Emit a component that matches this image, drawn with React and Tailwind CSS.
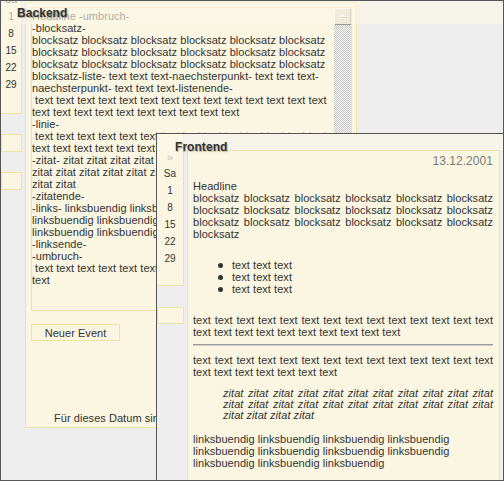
import React from 'react';

const rep = (w, n) => Array(n).fill(w).join(' ');
const T = (n) => rep('text', n);
const B = (n) => rep('blocksatz', n);
const Z = (n) => rep('zitat', n);
const L = (n) => rep('linksbuendig', n);

const backendLines = [
  'Headline -umbruch-',
  '-blocksatz-',
  B(6),
  B(6),
  B(6),
  'blocksatz-liste- text text text-naechsterpunkt- text text text-',
  'naechsterpunkt- text text text-listenende-',
  ' ' + T(14),
  T(10),
  '-linie-',
  ' ' + T(14),
  T(7),
  '-zitat- ' + Z(11),
  Z(13),
  Z(2),
  '-zitatende-',
  '-links- ' + L(4),
  L(4),
  L(3),
  '-linksende-',
  '-umbruch-',
  ' ' + T(14),
  'text',
];

function Calendar({ pbClass }) {
  const rows = ['1', '8', '15', '22', '29'];
  return (
    <div
      className={`flex flex-col border-b border-r border-[#efe1a3] bg-[#faf6e1] pt-[15px] text-center text-[10px] ${pbClass}`}
    >
      <div className="h-[17px] text-[11px] leading-[17px] text-[#c4c4c4]">»</div>
      <div className="h-[16px] leading-[16px]">Sa</div>
      {rows.map((r) => (
        <div key={r} className="h-[17px] leading-[17px]">
          {r}
        </div>
      ))}
    </div>
  );
}

function Scrollbar() {
  return (
    <div className="flex w-[17px] shrink-0 flex-col">
      <div className="flex h-[17px] items-center justify-center border border-b-[#9d9a8c] border-l-[#ffffff] border-r-[#9d9a8c] border-t-[#ffffff] bg-[#dcd8c6]">
        <svg width="9" height="7" viewBox="0 0 9 7">
          <path d="M5.5 1.5 L9 5 H2 Z" fill="#a9a697" />
          <path d="M4.5 0.5 L8 4 H1 Z" fill="#f6f4ec" />
          <rect x="1" y="5" width="7" height="1" fill="#f6f4ec" />
        </svg>
      </div>
      <div className="flex-1 bg-[conic-gradient(#c0c0c0_25%,#ffffff_0_50%,#c0c0c0_0_75%,#ffffff_0)] bg-[length:2px_2px]" />
    </div>
  );
}

function BackendWindow() {
  return (
    <div className="relative h-[481px] w-[504px] overflow-hidden border border-[#555555]">
      <div className="flex items-start">
        <div className="-mt-[41px] flex w-[21px] shrink-0 flex-col">
          <Calendar pbClass="pb-[20px]" />
          <div className="mt-[20px] h-[18px] border border-[#efe1a3] bg-[#faf6e1]" />
          <div className="mt-[20px] h-[18px] border border-[#efe1a3] bg-[#faf6e1]" />
        </div>
        <div className="ml-[3px] mt-[1px] flex w-[332px] shrink-0 flex-col border border-[#efe1a3] bg-[#faf6e1] pb-[3px] pl-[5px] pr-[4px] pt-[4px]">
          <div className="flex h-[304px] border border-[#efe1a3]">
            <div className="w-[302px] shrink-0 overflow-hidden pt-[2px]">
              {backendLines.map((l, i) => (
                <div key={i} className="h-[12px] whitespace-pre">
                  {l}
                </div>
              ))}
            </div>
            <Scrollbar />
          </div>
          <div className="mt-[13px] flex h-[17px] w-[89px] items-center justify-center border border-[#efe1a3]">
            Neuer Event
          </div>
          <div className="ml-[23px] mt-[71px] h-[12px] overflow-hidden whitespace-nowrap">
            Für dieses Datum sind keine Events eingetragen.
          </div>
        </div>
      </div>
      <div className="absolute left-0 right-0 top-0 h-[23px] bg-[#fcf9e8]/60 pl-[16px] pt-[6px]">
        <span className="text-[12px] font-bold leading-[12px] text-[#333333] [text-shadow:1px_1px_1px_rgba(0,0,0,0.28)]">
          Backend
        </span>
      </div>
    </div>
  );
}

function FrontendWindow() {
  return (
    <div className="absolute left-[156px] top-[133px] h-[348px] w-[348px] overflow-hidden border border-[#555555] bg-[#eeeeee]">
      <div className="flex items-start">
        <div className="flex w-[27px] shrink-0 flex-col">
          <Calendar pbClass="pb-[18px]" />
          <div className="mt-[21px] h-[17px] border border-[#efe1a3] bg-[#faf6e1]" />
        </div>
        <div className="ml-[3px] mt-[16px] h-[400px] w-[313px] shrink-0 border border-[#efe1a3] bg-[#faf6e1] pl-[5px] pr-[6px] pt-[4px]">
          <div className="text-right text-[12px] leading-[12px] text-[#7a7a7a]">13.12.2001</div>
          <div className="mt-[13px]">Headline</div>
          <p className="text-justify">{B(19)}</p>
          <div className="mt-[19px] flex flex-col">
            {[0, 1, 2].map((i) => (
              <div key={i} className="flex h-[12px] items-center">
                <span className="ml-[25px] h-[5px] w-[5px] rounded-full bg-[#333333]" />
                <span className="ml-[9px]">text text text</span>
              </div>
            ))}
          </div>
          <p className="mt-[19px] text-justify">{T(24)}</p>
          <div className="mt-[6px] h-[2px] border-b border-t border-b-[#d0d0d0] border-t-[#9a9a9a]" />
          <p className="mt-[8px] text-justify">{T(21)}</p>
          <p className="mt-[10px] pl-[30px] text-justify italic leading-[11px]">{Z(26)}</p>
          <p className="mt-[12px]">{L(11)}</p>
        </div>
      </div>
      <div className="absolute left-0 right-0 top-0 h-[16px] bg-[#fcf9e8]/60 pl-[18px] pt-[7px]">
        <span className="text-[12px] font-bold leading-[12px] text-[#333333] [text-shadow:1px_1px_1px_rgba(0,0,0,0.28)]">
          Frontend
        </span>
      </div>
    </div>
  );
}

export default function App() {
  return (
    <div className="relative h-[481px] w-[504px] overflow-hidden bg-[#eeeeee] font-['Liberation_Sans',Arial,sans-serif] text-[11px] leading-[12px] tracking-[0.05px] text-[#333333]">
      <BackendWindow />
      <FrontendWindow />
    </div>
  );
}
